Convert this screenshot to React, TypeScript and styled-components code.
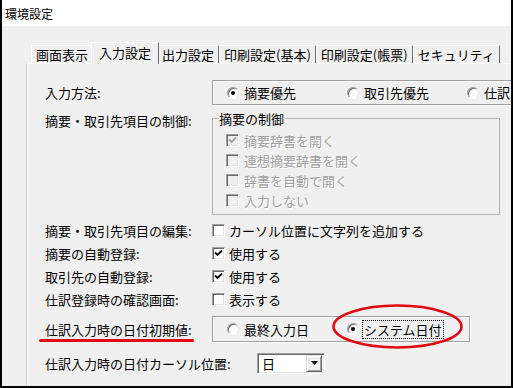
import React from 'react';
import styled, { createGlobalStyle } from 'styled-components';

const GlobalStyle = createGlobalStyle`
  html, body {
    margin: 0;
    padding: 0;
    background: #fff;
  }
  body {
    font-family: "Noto Sans CJK JP", "Noto Sans", sans-serif;
  }
`;

const Window = styled.div`
  width: 513px;
  height: 388px;
  box-sizing: border-box;
  border: 2px solid #000;
  border-top: none;
  background: #f0f0f0;
  overflow: hidden;
  display: flex;
  flex-direction: column;
  font-size: 13px;
  line-height: 17px;
  color: #000;
`;

const TitleBar = styled.div`
  height: 26px;
  flex-shrink: 0;
  background: #fff;
  padding-left: 3px;
  display: flex;
  align-items: center;
  font-size: 12px;
`;

const Body = styled.div`
  flex: 1;
  display: flex;
  flex-direction: column;
  padding: 16px 0 0 24px;
`;

const TabStrip = styled.div`
  display: flex;
  align-items: flex-end;
  height: 21px;
  padding-left: 5px;
  position: relative;
  z-index: 1;
`;

const Tab = styled.div<{ $active?: boolean }>`
  box-sizing: border-box;
  white-space: nowrap;
  background: #f0f0f0;
  border-top: 1px solid #fff;
  border-left: 1px solid #fff;
  border-right: 1px solid #696969;
  height: ${(p) => (p.$active ? '22px' : '18px')};
  padding: ${(p) => (p.$active ? '1px 7px 0' : '0 4px')};
  margin: ${(p) => (p.$active ? '0 -2px -1px' : '0')};
  position: relative;
  z-index: ${(p) => (p.$active ? 2 : 1)};
`;

const Panel = styled.div`
  flex: 1;
  width: 520px;
  border-top: 1px solid #fff;
  border-left: 1px solid #c8c8c8;
  box-shadow: inset 1px 0 0 #fff;
  padding-left: 18px;
  display: flex;
  flex-direction: column;
`;

const Row = styled.div<{ $h?: number; $mt: number; $top?: boolean }>`
  display: flex;
  align-items: ${(p) => (p.$top ? 'flex-start' : 'center')};
  height: ${(p) => (p.$h ? `${p.$h}px` : 'auto')};
  margin-top: ${(p) => p.$mt}px;
  flex-shrink: 0;
`;

const Label = styled.div<{ $w?: number; $mt?: number }>`
  width: ${(p) => p.$w ?? 167}px;
  flex-shrink: 0;
  white-space: nowrap;
  margin-top: ${(p) => p.$mt ?? 0}px;
`;

const Marked = styled.span`
  position: relative;
  &::after {
    content: '';
    position: absolute;
    left: -6px;
    right: -2px;
    bottom: -3px;
    height: 3px;
    border-radius: 2px;
    background: #e00a12;
  }
`;

const OptionBox = styled.div<{ $w: number }>`
  position: relative;
  box-sizing: border-box;
  width: ${(p) => p.$w}px;
  height: 100%;
  border: 1px solid #a0a0a0;
  box-shadow: inset 1px 1px 0 #fff, 1px 1px 0 #fff;
  display: flex;
  align-items: center;
  padding-left: 14px;
`;

const RadioItem = styled.label`
  display: flex;
  align-items: center;
  gap: 5px;
  width: 120px;
  flex-shrink: 0;
  white-space: nowrap;
`;

const RadioDot = styled.span<{ $on?: boolean }>`
  position: relative;
  box-sizing: border-box;
  width: 12px;
  height: 12px;
  border-radius: 50%;
  background: #fff;
  border: 1px solid;
  border-color: #a0a0a0 #e8e8e8 #fff #a0a0a0;
  box-shadow: inset 1px 1px 0 #696969;
  &::after {
    content: '';
    display: ${(p) => (p.$on ? 'block' : 'none')};
    position: absolute;
    left: 3px;
    top: 3px;
    width: 4px;
    height: 4px;
    border-radius: 50%;
    background: #000;
  }
`;

const FocusText = styled.span`
  border: 1px dotted #000;
  padding: 0 1px;
  margin-left: -2px;
`;

const Ellipse = styled.svg`
  position: absolute;
  left: 119px;
  top: -13px;
  overflow: visible;
  pointer-events: none;
`;

const Group = styled.fieldset`
  box-sizing: border-box;
  margin: 0;
  width: 288px;
  height: 105px;
  border: 1px solid #b4b4b4;
  padding: 3px 0 0 13px;
  min-width: 0;
`;

const Legend = styled.legend`
  padding: 0 1px 0 0;
  margin-left: -7px;
  line-height: 17px;
`;

const CheckRow = styled.div<{ $h?: number; $disabled?: boolean }>`
  display: flex;
  align-items: center;
  gap: ${(p) => (p.$disabled ? 5 : 4)}px;
  height: ${(p) => p.$h ?? 20}px;
  white-space: nowrap;
  color: ${(p) => (p.$disabled ? '#a0a0a0' : '#000')};
  text-shadow: ${(p) => (p.$disabled ? '1px 1px 0 #fff' : 'none')};
`;

const Box = styled.span<{ $disabled?: boolean }>`
  box-sizing: border-box;
  width: 13px;
  height: 13px;
  flex-shrink: 0;
  display: flex;
  align-items: center;
  justify-content: center;
  background: ${(p) => (p.$disabled ? '#f0f0f0' : '#fff')};
  border: 1px solid;
  border-color: #a0a0a0 #fff #fff #a0a0a0;
  box-shadow: inset 1px 1px 0 #696969, inset -1px -1px 0 #e3e3e3;
`;

const Select = styled.div`
  box-sizing: border-box;
  width: 68px;
  height: 21px;
  background: #fff;
  border: 1px solid;
  border-color: #a0a0a0 #fff #fff #a0a0a0;
  box-shadow: inset 1px 1px 0 #696969, inset -1px -1px 0 #e3e3e3;
  display: flex;
  align-items: center;
  padding: 2px 2px 2px 4px;
`;

const SelectValue = styled.span`
  flex: 1;
`;

const DropButton = styled.span`
  box-sizing: border-box;
  width: 16px;
  height: 17px;
  background: #f0f0f0;
  border: 1px solid;
  border-color: #e3e3e3 #696969 #696969 #e3e3e3;
  box-shadow: inset 1px 1px 0 #fff, inset -1px -1px 0 #a0a0a0;
  display: flex;
  align-items: center;
  justify-content: center;
`;

const Check = ({ on, disabled }: { on?: boolean; disabled?: boolean }) => (
  <Box $disabled={disabled}>
    {on && (
      <svg width="9" height="9" viewBox="0 0 9 9">
        <path d="M1 3.5 L3.5 6 L8 1.5" fill="none" stroke={disabled ? '#a0a0a0' : '#000'} strokeWidth="1.8" />
      </svg>
    )}
  </Box>
);

const tabs = ['画面表示', '入力設定', '出力設定', '印刷設定(基本)', '印刷設定(帳票)', 'セキュリティ'];

export default function App() {
  return (
    <>
      <GlobalStyle />
      <Window>
        <TitleBar>環境設定</TitleBar>
        <Body>
          <TabStrip>
            {tabs.map((t, i) => (
              <Tab key={t} $active={i === 1}>
                {t}
              </Tab>
            ))}
          </TabStrip>
          <Panel>
            <Row $h={25} $mt={16}>
              <Label>入力方法:</Label>
              <OptionBox $w={320}>
                <RadioItem>
                  <RadioDot $on />
                  摘要優先
                </RadioItem>
                <RadioItem>
                  <RadioDot />
                  取引先優先
                </RadioItem>
                <RadioItem>
                  <RadioDot />
                  仕訳
                </RadioItem>
              </OptionBox>
            </Row>

            <Row $mt={5} $top>
              <Label $mt={2}>摘要・取引先項目の制御:</Label>
              <Group>
                <Legend>摘要の制御</Legend>
                <CheckRow $disabled>
                  <Check on disabled />
                  摘要辞書を開く
                </CheckRow>
                <CheckRow $disabled>
                  <Check disabled />
                  連想摘要辞書を開く
                </CheckRow>
                <CheckRow $disabled>
                  <Check disabled />
                  辞書を自動で開く
                </CheckRow>
                <CheckRow $disabled>
                  <Check disabled />
                  入力しない
                </CheckRow>
              </Group>
            </Row>

            <Row $h={23} $mt={4}>
              <Label>摘要・取引先項目の編集:</Label>
              <CheckRow $h={23}>
                <Check />
                カーソル位置に文字列を追加する
              </CheckRow>
            </Row>
            <Row $h={23} $mt={0}>
              <Label>摘要の自動登録:</Label>
              <CheckRow $h={23}>
                <Check on />
                使用する
              </CheckRow>
            </Row>
            <Row $h={23} $mt={0}>
              <Label>取引先の自動登録:</Label>
              <CheckRow $h={23}>
                <Check on />
                使用する
              </CheckRow>
            </Row>
            <Row $h={23} $mt={0}>
              <Label>仕訳登録時の確認画面:</Label>
              <CheckRow $h={23}>
                <Check />
                表示する
              </CheckRow>
            </Row>

            <Row $h={26} $mt={5}>
              <Label>
                <Marked>仕訳入力時の日付初期値:</Marked>
              </Label>
              <OptionBox $w={258}>
                <RadioItem>
                  <RadioDot />
                  最終入力日
                </RadioItem>
                <RadioItem>
                  <RadioDot $on />
                  <FocusText>システム日付</FocusText>
                </RadioItem>
                <Ellipse width="131" height="45" viewBox="0 0 131 45">
                  <ellipse cx="65.5" cy="22.5" rx="64" ry="21" fill="none" stroke="#e00a12" strokeWidth="2.6" />
                </Ellipse>
              </OptionBox>
            </Row>

            <Row $h={22} $mt={10}>
              <Label $w={212}>仕訳入力時の日付カーソル位置:</Label>
              <Select>
                <SelectValue>日</SelectValue>
                <DropButton>
                  <svg width="7" height="4" viewBox="0 0 7 4">
                    <path d="M0 0 H7 L3.5 4 Z" fill="#000" />
                  </svg>
                </DropButton>
              </Select>
            </Row>
          </Panel>
        </Body>
      </Window>
    </>
  );
}
